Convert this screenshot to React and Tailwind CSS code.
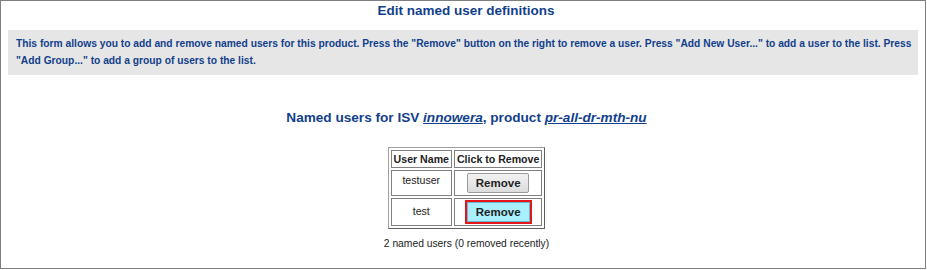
export default function App() {
  const blue = "text-[#123f8c]";
  return (
    <div className="w-[926px] h-[269px] border border-[#7f7f7f] bg-white font-['Liberation_Sans',Arial,sans-serif]">
      <div className={`text-center font-bold text-[13.5px] leading-[18px] pt-[1px] pl-[6px] ${blue}`}>
        Edit named user definitions
      </div>
      <div className={`mx-[7px] mt-[10px] h-[45px] bg-[#e6e6e6] pl-[8px] pr-[3px] pt-[5px] text-[10.25px] leading-[17px] font-bold ${blue}`}>
        This form allows you to add and remove named users for this product. Press the "Remove" button on the right to remove a user. Press "Add New User..." to add a user to the list. Press "Add Group..." to add a group of users to the list.
      </div>
      <div className={`text-center font-bold text-[13.6px] leading-[18px] mt-[34px] pl-[7px] ${blue}`}>
        Named users for ISV <a className="italic underline">innowera</a>, product <a className="italic underline">pr-all-dr-mth-nu</a>
      </div>
      <div className="flex justify-center mt-[20px] pl-[7px]">
        <table className="border-separate border-spacing-[2px] border border-t-[#a0a0a0] border-l-[#a0a0a0] border-r-[#606060] border-b-[#606060] text-[10.6px] text-[#222]">
          <thead>
            <tr>
              <th className="border border-[#808080] px-[2px] h-[18px] font-bold leading-[14px]">User Name</th>
              <th className="border border-[#808080] px-[2px] h-[18px] font-bold leading-[14px]">Click to Remove</th>
            </tr>
          </thead>
          <tbody>
            <tr>
              <td className="border border-[#808080] text-center align-middle h-[26px] pb-[4px] font-normal">testuser</td>
              <td className="border border-[#808080] text-center h-[26px]">
                <button className="w-[62px] h-[20px] border border-[#9a9a9a] rounded-[2px] bg-gradient-to-b from-[#f2f2f2] to-[#dcdcdc] font-bold text-[11.5px] text-[#222] leading-[16px]">
                  Remove
                </button>
              </td>
            </tr>
            <tr>
              <td className="border border-[#808080] text-center h-[28px] font-normal">test</td>
              <td className="border border-[#808080] text-center h-[28px]">
                <button className="w-[67px] h-[24px] border-2 border-[#e8141a] bg-[#a8f0ff] font-bold text-[11.5px] text-[#222] leading-[16px] shadow-[inset_0_0_0_1px_#6ab8cc]">
                  Remove
                </button>
              </td>
            </tr>
          </tbody>
        </table>
      </div>
      <div className="text-center text-[10.3px] leading-[14px] mt-[8px] pl-[7px] text-[#222]">
        2 named users (0 removed recently)
      </div>
    </div>
  );
}
